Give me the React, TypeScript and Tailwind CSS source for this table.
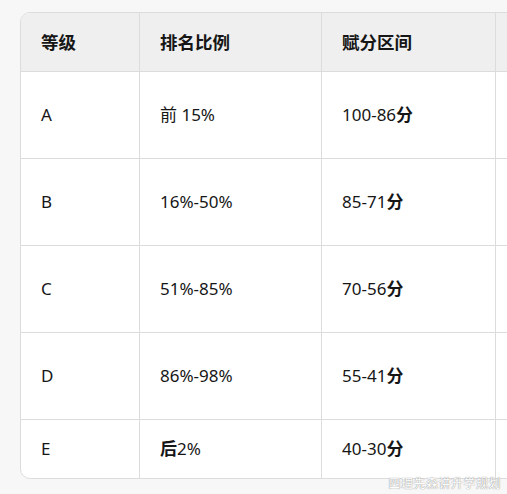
const rows = [
  { grade: 'A', rank: <>前 15%</>, score: '100-86', h: 'h-[87px]' },
  { grade: 'B', rank: <>16%-50%</>, score: '85-71', h: 'h-[87px]' },
  { grade: 'C', rank: <>51%-85%</>, score: '70-56', h: 'h-[87px]' },
  { grade: 'D', rank: <>86%-98%</>, score: '55-41', h: 'h-[87px]' },
  { grade: 'E', rank: <><span className="font-bold">后</span>2%</>, score: '40-30', h: 'h-[58px]' },
];

export default function App() {
  return (
    <div
      className="relative h-[494px] w-[507px] overflow-hidden bg-[#f7f7f7] pl-[20px] pt-[12px] text-[17px] text-[#161616]"
      style={{ fontFamily: '"Noto Sans", "Noto Sans CJK SC", sans-serif' }}
    >
      <div className="w-[620px] overflow-hidden rounded-l-[10px] border border-[#dcdcdc] bg-white">
        <div className="grid grid-cols-[119px_182px_174px_1fr] bg-[#efefef] text-[17.5px] font-bold">
          {['等级', '排名比例', '赋分区间', ''].map((t, i) => (
            <div key={i} className="flex h-[59px] items-center border-b border-r border-[#dcdcdc] pl-5">
              {t}
            </div>
          ))}
        </div>
        {rows.map((r, i) => (
          <div key={r.grade} className="grid grid-cols-[119px_182px_174px_1fr]">
            <div className={`flex ${r.h} items-center border-r border-[#dcdcdc] pl-5 ${i < 4 ? 'border-b' : ''}`}>{r.grade}</div>
            <div className={`flex ${r.h} items-center border-r border-[#dcdcdc] pl-5 ${i < 4 ? 'border-b' : ''}`}>{r.rank}</div>
            <div className={`flex ${r.h} items-center border-r border-[#dcdcdc] pl-5 ${i < 4 ? 'border-b' : ''}`}>
              {r.score}<span className="font-bold">分</span>
            </div>
            <div className={`${r.h} border-[#dcdcdc] ${i < 4 ? 'border-b' : ''}`} />
          </div>
        ))}
      </div>
      <div className="absolute bottom-[1px] right-[6px] text-[12px] tracking-[0.5px] text-white [text-shadow:0_0_1px_#999,0_0_1px_#999]">
        四理先森讲升学规划
      </div>
    </div>
  );
}
